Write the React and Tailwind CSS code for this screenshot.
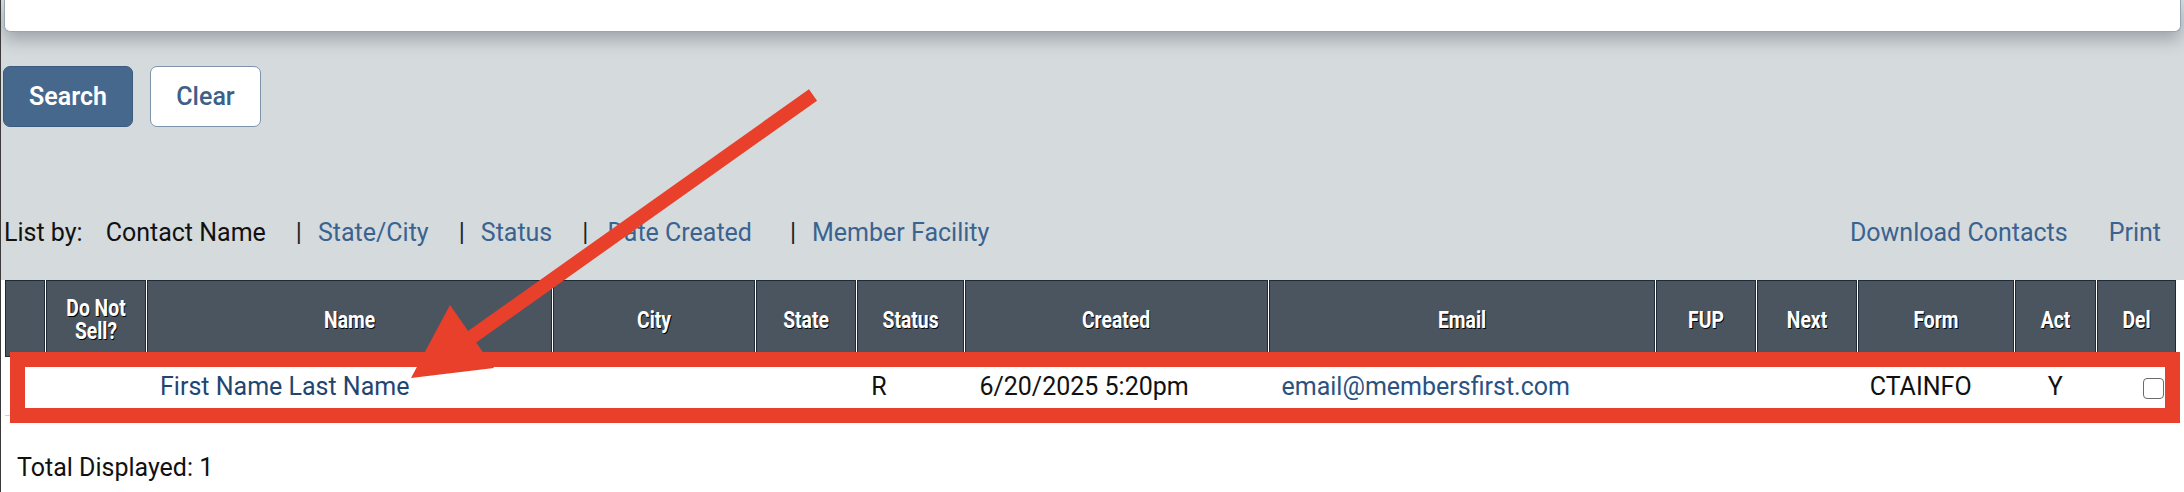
const columns = [
  { label: 'Blank', w: 'w-[40px]' },
  { label: 'Do Not Sell?', w: 'w-[100px]' },
  { label: 'Name', w: 'w-[405px]' },
  { label: 'City', w: 'w-[202px]' },
  { label: 'State', w: 'w-[100px]' },
  { label: 'Status', w: 'w-[107px]' },
  { label: 'Created', w: 'w-[302px]' },
  { label: 'Email', w: 'w-[386px]' },
  { label: 'FUP', w: 'w-[100px]' },
  { label: 'Next', w: 'w-[100px]' },
  { label: 'Form', w: 'w-[156px]' },
  { label: 'Act', w: 'w-[81px]' },
  { label: 'Del', w: 'w-[79px]' },
];

const listLinks = ['State/City', 'Status', 'Date Created', 'Member Facility'];

function HeaderCell({ label, w }) {
  if (label === 'Blank') {
    return <th className={`${w} border border-[#1e2a35] bg-[#4a5560]`} />;
  }
  const lines = label === 'Do Not Sell?' ? ['Do Not', 'Sell?'] : [label];
  return (
    <th
      className={`${w} border border-[#1e2a35] bg-[#4a5560] text-center align-middle text-white font-bold text-[23px] leading-[23px] font-[Roboto,sans-serif] [text-shadow:1px_1px_0_#000]`}
    >
      <div className="scale-x-[0.84] pt-[3px]">
        {lines.map((l) => (
          <div key={l}>{l}</div>
        ))}
      </div>
    </th>
  );
}

export default function App() {
  return (
    <div className="relative w-[2184px] h-[492px] overflow-hidden bg-white border-l border-[#3a3a3a] font-[Roboto,sans-serif]">
      {/* grey search area */}
      <div className="h-[280px] bg-[#d5dadd] flex flex-col">
        <div className="mx-[3px] h-[32px] bg-white rounded-b-[6px] border border-t-0 border-[#97a4b1] shadow-[0_8px_16px_rgba(60,70,80,0.35)]" />

        <div className="mt-[34px] ml-[2px] flex gap-[17px]">
          <button className="w-[130px] h-[61px] rounded-[7px] bg-[#45688c] border border-[#3b5c7e] text-white text-[25px] font-semibold">
            Search
          </button>
          <button className="w-[111px] h-[61px] rounded-[7px] bg-white border border-[#7d93ab] text-[#3c6189] text-[25px] font-medium">
            Clear
          </button>
        </div>

        <div className="mt-[91px] h-[30px] flex items-center justify-between text-[25px] leading-[30px]">
          <div className="flex items-center pl-[3px]">
            <span className="text-[#111]">List by:</span>
            <span className="ml-[23px] text-[#111]">Contact Name</span>
            {listLinks.map((l, i) => (
              <span key={l} className="flex items-center">
                <span className={`${i === 3 ? 'ml-[38px]' : 'ml-[30px]'} text-[#222]`}>|</span>
                <a className={`${i === 2 ? 'ml-[19px]' : 'ml-[16px]'} text-[#3a6390]`}>{l}</a>
              </span>
            ))}
          </div>
          <div className="flex items-center gap-[41px] pr-[23px] text-[#3a6390]">
            <a>Download Contacts</a>
            <a>Print</a>
          </div>
        </div>
      </div>

      {/* results table */}
      <table className="ml-[3px] table-fixed border-separate border-spacing-[1px] w-[2173px] -mt-[1px]">
        <thead>
          <tr className="h-[77px]">
            {columns.map((c) => (
              <HeaderCell key={c.label} {...c} />
            ))}
          </tr>
        </thead>
        <tbody>
          <tr className="h-[58px] text-[25px] text-[#111]">
            <td className="border-b border-[#d2d2d2]" />
            <td className="border-b border-[#d2d2d2]" />
            <td className="border-b border-[#d2d2d2] pl-[13px]">
              <a className="text-[#1f4672]">First Name Last Name</a>
            </td>
            <td className="border-b border-[#d2d2d2]" />
            <td className="border-b border-[#d2d2d2]" />
            <td className="border-b border-[#d2d2d2] pl-[14px]">R</td>
            <td className="border-b border-[#d2d2d2] pl-[14px]">6/20/2025 5:20pm</td>
            <td className="border-b border-[#d2d2d2] pl-[13px]">
              <a className="text-[#2a5282]">email@membersfirst.com</a>
            </td>
            <td className="border-b border-[#d2d2d2]" />
            <td className="border-b border-[#d2d2d2]" />
            <td className="border-b border-[#d2d2d2] pl-[12px]">CTAINFO</td>
            <td className="border-b border-[#d2d2d2] text-center">Y</td>
            <td className="border-b border-[#d2d2d2] text-right pr-[12px]">
              <span className="inline-block align-middle w-[21px] h-[21px] rounded-[4px] border-[1.5px] border-[#6b6b6b] bg-white" />
            </td>
          </tr>
        </tbody>
      </table>

      <div className="mt-[36px] pl-[16px] text-[25px] text-[#111] leading-[30px]">Total Displayed: 1</div>

      {/* annotation overlay */}
      <svg className="absolute left-0 top-0 pointer-events-none" width="2184" height="492" viewBox="0 0 2184 492">
        <rect x="16.5" y="359.5" width="2155" height="56" fill="none" stroke="#e8402a" strokeWidth="15" />
        <line x1="812" y1="95" x2="468" y2="339" stroke="#e8402a" strokeWidth="14" />
        <polygon points="410,378 449,305 493,368" fill="#e8402a" />
      </svg>
    </div>
  );
}
